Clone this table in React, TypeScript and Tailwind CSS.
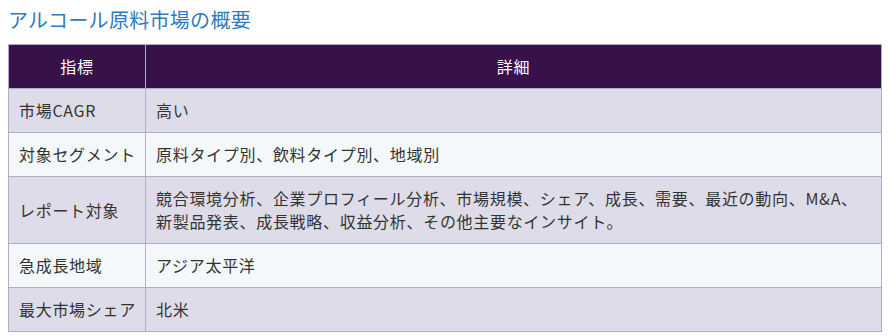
const rows: [string, string[]][] = [
  ["市場CAGR", ["高い"]],
  ["対象セグメント", ["原料タイプ別、飲料タイプ別、地域別"]],
  [
    "レポート対象",
    [
      "競合環境分析、企業プロフィール分析、市場規模、シェア、成長、需要、最近の動向、M&A、",
      "新製品発表、成長戦略、収益分析、その他主要なインサイト。",
    ],
  ],
  ["急成長地域", ["アジア太平洋"]],
  ["最大市場シェア", ["北米"]],
];

export default function App() {
  return (
    <div
      className="w-[892px] h-[336px] bg-white px-2 pt-[7px] text-[#333]"
      style={{ fontFamily: '"Noto Sans CJK JP", "Noto Sans", sans-serif' }}
    >
      <h2 className="text-[20px] leading-[26px] font-normal tracking-[0.3px] text-[#2e7cbf]">
        アルコール原料市場の概要
      </h2>
      <table className="mt-[11px] w-[874px] table-fixed border-collapse text-[16px] leading-[23px] tracking-[0.7px]">
        <thead>
          <tr className="bg-[#36114a] text-white">
            <th className="w-[137px] border border-[#b4aac9] h-[44px] font-normal text-center">
              指標
            </th>
            <th className="border border-[#b4aac9] font-normal text-center">詳細</th>
          </tr>
        </thead>
        <tbody>
          {rows.map(([label, lines], i) => (
            <tr key={label} className={i % 2 === 0 ? "bg-[#dfdcea]" : "bg-[#f5f8fb]"}>
              <td className="whitespace-nowrap border border-[#b4aac9] pl-[10px] pr-[6px] pt-[10px] pb-[10px] align-middle">
                {label}
              </td>
              <td className="border border-[#b4aac9] px-[10px] pt-[10px] pb-[10px]">
                {lines.map((l) => (
                  <div key={l} className="whitespace-nowrap">
                    {l}
                  </div>
                ))}
              </td>
            </tr>
          ))}
        </tbody>
      </table>
    </div>
  );
}
